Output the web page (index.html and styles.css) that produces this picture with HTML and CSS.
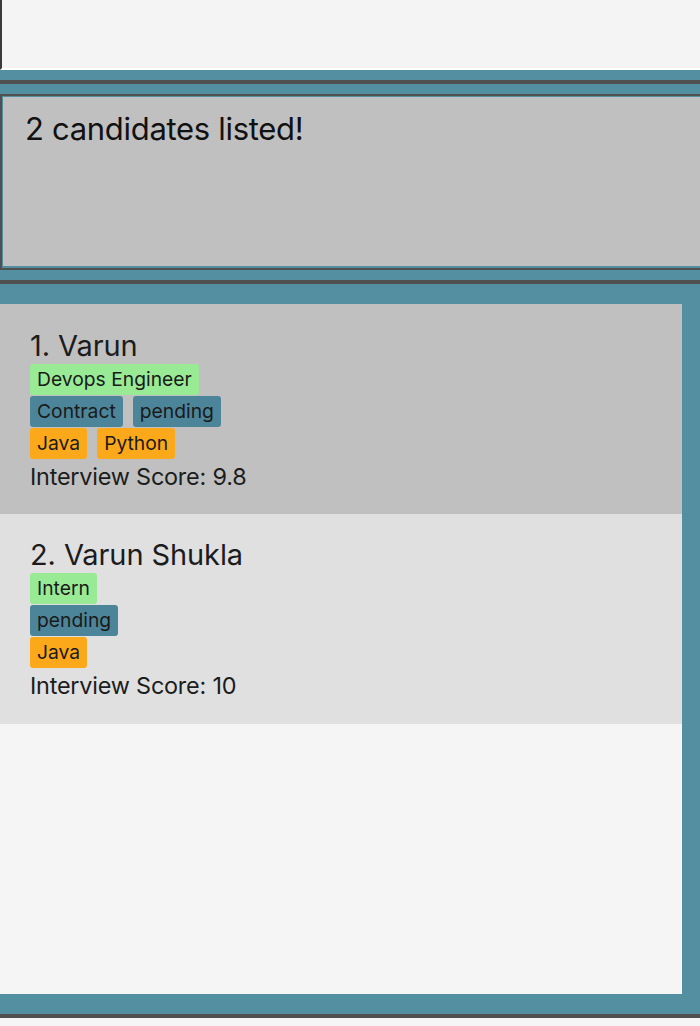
FILE: index.html
```html
<!DOCTYPE html>
<html>
<head>
<meta charset="utf-8">
<link rel="stylesheet" href="styles.css">
</head>
<body>
<div class="app">
  <div class="command-box"></div>
  <div class="band band-top"></div>
  <div class="divider"></div>
  <div class="result-pane">
    <div class="result-outer">
      <div class="result-inner">2 candidates listed!</div>
    </div>
  </div>
  <div class="divider"></div>
  <div class="list-pane">
    <div class="list">
      <div class="card card-odd">
        <div class="name">1. Varun</div>
        <div class="tags"><span class="tag tag-role">Devops Engineer</span></div>
        <div class="tags"><span class="tag tag-status">Contract</span><span class="tag tag-status">pending</span></div>
        <div class="tags"><span class="tag tag-skill">Java</span><span class="tag tag-skill">Python</span></div>
        <div class="score">Interview Score: 9.8</div>
      </div>
      <div class="card card-even">
        <div class="name">2. Varun Shukla</div>
        <div class="tags"><span class="tag tag-role">Intern</span></div>
        <div class="tags"><span class="tag tag-status">pending</span></div>
        <div class="tags"><span class="tag tag-skill">Java</span></div>
        <div class="score">Interview Score: 10</div>
      </div>
    </div>
  </div>
  <div class="divider"></div>
  <div class="footer"></div>
</div>
</body>
</html>
```

FILE: styles.css
```css
* { box-sizing: border-box; }
html, body { margin: 0; padding: 0; }
body {
  background: #f5f5f5;
  font-family: "Inter", "Noto Sans", sans-serif;
  color: #1c1c1c;
  width: 700px;
  height: 1026px;
  overflow: hidden;
}
.app { display: flex; flex-direction: column; width: 700px; }
.command-box {
  height: 70px;
  background: #f4f4f4;
  border-left: 2px solid #3a3a3a;
  border-bottom: 2px solid #ffffff;
}
.band { background: #548fa1; }
.band-top { height: 10px; }
.divider { height: 4px; background: #505050; }
.result-pane {
  background: #548fa1;
  padding: 10px 0 10px 0;
}
.result-outer {
  height: 176px;
  border: 2px solid #505050;
  border-right: none;
  padding: 1px 0 2px 1px;
  background: #548fa1;
}
.result-inner {
  height: 100%;
  background: #c0c0c0;
  padding: 14px 0 0 22px;
  font-size: 31px;
  line-height: 36px;
  letter-spacing: -0.3px;
  color: #111;
}
.list-pane {
  background: #548fa1;
  padding: 20px 18px 20px 0;
}
.list {
  height: 690px;
  background: #f5f5f5;
  display: flex;
  flex-direction: column;
}
.card {
  height: 210px;
  padding: 24px 0 0 30px;
  display: flex;
  flex-direction: column;
  align-items: flex-start;
}
.card-odd { background: #c0c0c0; }
.card-even { background: #e0e0e0; padding-top: 23px; }
.name {
  font-size: 29px;
  line-height: 35px;
  margin-bottom: 1px;
  color: #1c1c1c;
  letter-spacing: -0.1px;
}
.tags {
  display: flex;
  gap: 10px;
  margin-bottom: 1px;
}
.tag {
  height: 31px;
  line-height: 31px;
  padding: 0 7px;
  border-radius: 3px;
  font-size: 19.3px;
  color: #1a1a1a;
}
.tag-role { background: #98eb94; }
.tag-status { background: #4c8599; }
.tag-skill { background: #fba91a; }
.score {
  margin-top: 3px;
  font-size: 23.4px;
  line-height: 28px;
  color: #1c1c1c;
  letter-spacing: -0.2px;
}
.footer { height: 10px; background: #f5f5f5; }
```
